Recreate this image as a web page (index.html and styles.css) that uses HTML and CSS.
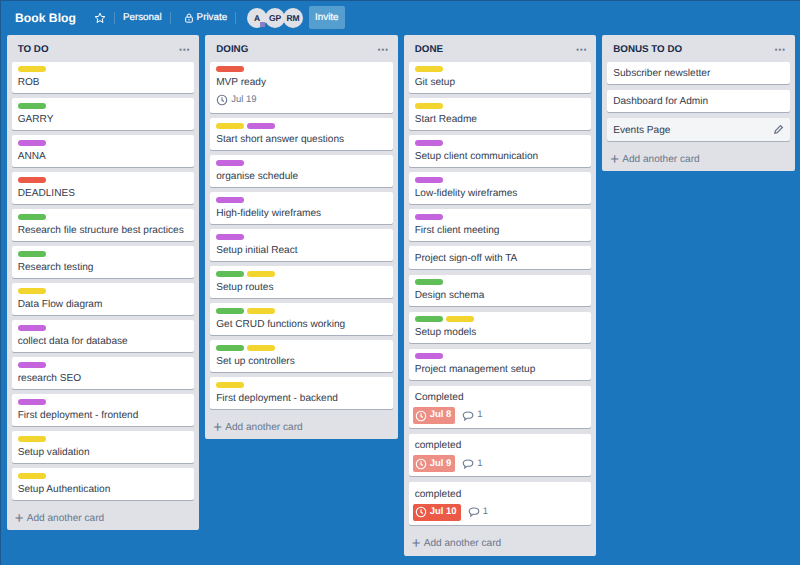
FILE: index.html
```html
<!DOCTYPE html>
<html>
<head>
    <title>Book Blog</title>
    <link rel="stylesheet" href="styles.css">
</head>
<body>
    <svg class="defs" width="0" height="0">
        <symbol id="clock" viewBox="0 0 12 12"><circle cx="6" cy="6" r="4.7" fill="none" stroke="currentColor" stroke-width="1.1"/><path d="M6 3.2V6.3L8 7.4" fill="none" stroke="currentColor" stroke-width="1.1"/></symbol>
        <symbol id="bubble" viewBox="0 0 12 12"><path d="M1.2 5.2C1.2 3.2 3 2 6 2s4.8 1.2 4.8 3.2S9 8.3 6 8.3H4.8L2.8 10V7.8C1.800 7.300 1.200 6.300 1.200 5.200Z" fill="none" stroke="currentColor" stroke-width="1.1"/></symbol>
    </svg>

    <header class="topbar">
        <h1 class="board-name">Book Blog</h1>
        <svg class="star" viewBox="0 0 12 12" width="12" height="12"><path d="M6 1.2L7.400 4.400L10.900 4.700L8.200 7L9 10.500L6 8.600L3 10.500L3.800 7L1.100 4.700L4.600 4.400Z" fill="none" stroke="#fff" stroke-width="1"/></svg>
        <span class="sep"></span>
        <span class="bar-text">Personal</span>
        <span class="sep"></span>
        <svg class="lock" viewBox="0 0 12 12" width="10" height="10"><rect x="2" y="5" width="8" height="6" rx="1" fill="none" stroke="#fff" stroke-width="1.200"/><path d="M3.800 5V3.400a2.200 2.200 0 0 1 4.400 0V5" fill="none" stroke="#fff" stroke-width="1.200"/><circle cx="6" cy="8" r=".9" fill="#fff"/></svg>
        <span class="bar-text">Private</span>
        <span class="sep"></span>
        <div class="members">
            <span class="avatar">A<span class="badge"></span></span>
            <span class="avatar">GP</span>
            <span class="avatar">RM</span>
        </div>
        <span class="invite">Invite</span>
    </header>

    <main class="board">
        <section class="list">
            <div class="list-head"><h2>TO DO</h2><span class="dots">···</span></div>
            <div class="card"><div class="labels"><i class="yellow"></i></div>ROB</div>
            <div class="card"><div class="labels"><i class="green"></i></div>GARRY</div>
            <div class="card"><div class="labels"><i class="purple"></i></div>ANNA</div>
            <div class="card"><div class="labels"><i class="red"></i></div>DEADLINES</div>
            <div class="card"><div class="labels"><i class="green"></i></div>Research file structure best practices</div>
            <div class="card"><div class="labels"><i class="green"></i></div>Research testing</div>
            <div class="card"><div class="labels"><i class="yellow"></i></div>Data Flow diagram</div>
            <div class="card"><div class="labels"><i class="purple"></i></div>collect data for database</div>
            <div class="card"><div class="labels"><i class="purple"></i></div>research SEO</div>
            <div class="card"><div class="labels"><i class="purple"></i></div>First deployment - frontend</div>
            <div class="card"><div class="labels"><i class="yellow"></i></div>Setup validation</div>
            <div class="card"><div class="labels"><i class="yellow"></i></div>Setup Authentication</div>
            <div class="add"><span class="plus">+</span>Add another card</div>
        </section>

        <section class="list">
            <div class="list-head"><h2>DOING</h2><span class="dots">···</span></div>
            <div class="card"><div class="labels"><i class="red"></i></div>MVP ready
                <div class="meta"><span class="due plain"><svg width="12" height="12"><use href="#clock"/></svg>Jul 19</span></div>
            </div>
            <div class="card"><div class="labels"><i class="yellow"></i><i class="purple"></i></div>Start short answer questions</div>
            <div class="card"><div class="labels"><i class="purple"></i></div>organise schedule</div>
            <div class="card"><div class="labels"><i class="purple"></i></div>High-fidelity wireframes</div>
            <div class="card"><div class="labels"><i class="purple"></i></div>Setup initial React</div>
            <div class="card"><div class="labels"><i class="green"></i><i class="yellow"></i></div>Setup routes</div>
            <div class="card"><div class="labels"><i class="green"></i><i class="yellow"></i></div>Get CRUD functions working</div>
            <div class="card"><div class="labels"><i class="green"></i><i class="yellow"></i></div>Set up controllers</div>
            <div class="card"><div class="labels"><i class="yellow"></i></div>First deployment - backend</div>
            <div class="add"><span class="plus">+</span>Add another card</div>
        </section>

        <section class="list">
            <div class="list-head"><h2>DONE</h2><span class="dots">···</span></div>
            <div class="card"><div class="labels"><i class="yellow"></i></div>Git setup</div>
            <div class="card"><div class="labels"><i class="yellow"></i></div>Start Readme</div>
            <div class="card"><div class="labels"><i class="purple"></i></div>Setup client communication</div>
            <div class="card"><div class="labels"><i class="purple"></i></div>Low-fidelity wireframes</div>
            <div class="card"><div class="labels"><i class="purple"></i></div>First client meeting</div>
            <div class="card no-label">Project sign-off with TA</div>
            <div class="card"><div class="labels"><i class="green"></i></div>Design schema</div>
            <div class="card"><div class="labels"><i class="green"></i><i class="yellow"></i></div>Setup models</div>
            <div class="card"><div class="labels"><i class="purple"></i></div>Project management setup</div>
            <div class="card no-label">Completed
                <div class="meta"><span class="due faded"><svg width="12" height="12"><use href="#clock"/></svg>Jul 8</span><span class="comments"><svg width="12" height="12"><use href="#bubble"/></svg>1</span></div>
            </div>
            <div class="card no-label">completed
                <div class="meta"><span class="due faded"><svg width="12" height="12"><use href="#clock"/></svg>Jul 9</span><span class="comments"><svg width="12" height="12"><use href="#bubble"/></svg>1</span></div>
            </div>
            <div class="card no-label">completed
                <div class="meta"><span class="due overdue"><svg width="12" height="12"><use href="#clock"/></svg>Jul 10</span><span class="comments"><svg width="12" height="12"><use href="#bubble"/></svg>1</span></div>
            </div>
            <div class="add"><span class="plus">+</span>Add another card</div>
        </section>

        <section class="list">
            <div class="list-head"><h2>BONUS TO DO</h2><span class="dots">···</span></div>
            <div class="card no-label">Subscriber newsletter</div>
            <div class="card no-label">Dashboard for Admin</div>
            <div class="card no-label hover">Events Page
                <svg class="pencil" viewBox="0 0 12 12" width="11" height="11"><path d="M2 10L2.600 7.400L8.200 1.800L10.200 3.800L4.600 9.400Z" fill="none" stroke="#6b778c" stroke-width="1.400"/></svg>
            </div>
            <div class="add"><span class="plus">+</span>Add another card</div>
        </section>
    </main>
</body>
</html>
```

FILE: styles.css
```css
* {
    box-sizing: border-box;
}
body {
    margin: 0;
    height: 565px;
    overflow: hidden;
    font-family: "Liberation Sans", Arial, sans-serif;
    text-rendering: geometricPrecision;
    background-color: #1b76bd;
    box-shadow: inset 1px 1px 0 rgba(30, 60, 100, 0.5);
    color: #333c4d;
    font-size: 10.1px;
}
.defs {
    display: block;
    height: 0;
}
.topbar {
    display: flex;
    align-items: center;
    height: 35px;
    padding: 0 0 0 15px;
    color: #fff;
}
.board-name {
    margin: 0 18px 0 0;
    font-size: 12.2px;
    font-weight: bold;
}
.lock {
    margin-right: 3px;
    margin-left: 5px;
}
.sep {
    width: 1px;
    height: 12px;
    margin: 0 8px;
    background-color: rgba(255, 255, 255, 0.2);
}
.bar-text {
    font-size: 9.8px;
    -webkit-text-stroke: 0.2px #fff;
}
.members {
    display: flex;
    margin-left: 3px;
}
.avatar {
    position: relative;
    display: flex;
    align-items: center;
    justify-content: center;
    width: 20px;
    height: 20px;
    margin-right: -2px;
    border-radius: 50%;
    background-color: #dfe1e6;
    color: #172b4d;
    font-size: 8.500px;
    font-weight: bold;
}
.badge {
    position: absolute;
    right: 2px;
    bottom: 1px;
    width: 5px;
    height: 5px;
    background-color: #8a7fc0;
}
.invite {
    margin-left: 8px;
    padding: 0 6px;
    height: 23px;
    line-height: 23px;
    border-radius: 2px;
    background-color: #549fd0;
    font-size: 9.8px;
    -webkit-text-stroke: 0.2px #fff;
}
.board {
    display: flex;
    align-items: flex-start;
    gap: 6px;
    padding-left: 6.700px;
}
.list {
    flex: 0 0 192.500px;
    padding: 0 5px;
    border-radius: 2px;
    background-color: #dfe1e6;
}
.list-head {
    display: flex;
    justify-content: space-between;
    align-items: center;
    height: 26.500px;
    padding: 2px 4px 0 6px;
}
.list-head h2 {
    margin: 0;
    font-size: 9.800px;
    font-weight: bold;
    color: #172b4d;
}
.dots {
    font-size: 13px;
    font-weight: bold;
    color: #6b778c;
    letter-spacing: -0.5px;
}
.card {
    position: relative;
    margin-bottom: 5.800px;
    padding: 4.700px 6px 3.500px;
    border-radius: 2px;
    background-color: #fff;
    box-shadow: 0 1px 0 rgba(9, 30, 66, 0.25);
    line-height: 12.500px;
}
.card.no-label {
    padding-top: 6.500px;
}
.card.hover {
    background-color: #f4f5f7;
}
.labels {
    display: flex;
    gap: 3px;
    height: 6px;
    margin-bottom: 4.500px;
}
.labels i {
    display: block;
    width: 28px;
    height: 5.500px;
    border-radius: 3px;
}
.yellow { background-color: #f2d52f; }
.green { background-color: #5fbf56; }
.purple { background-color: #c465dd; }
.red { background-color: #eb5a46; }
.meta {
    display: flex;
    align-items: center;
    gap: 7px;
    margin: 2.500px 0 0.500px -2px;
}
.due {
    display: flex;
    align-items: center;
    gap: 3px;
    height: 17px;
    padding: 0 4px 0 2px;
    border-radius: 2px;
    font-size: 9.500px;
}
.due.plain {
    color: #6b778c;
}
.due.faded {
    background-color: #ee8f85;
    color: #fff;
    font-weight: bold;
}
.due.overdue {
    background-color: #eb5a46;
    color: #fff;
    font-weight: bold;
}
.comments {
    display: flex;
    align-items: center;
    gap: 3px;
    color: #6b778c;
    font-size: 9.500px;
}
.pencil {
    position: absolute;
    right: 6px;
    top: 6px;
}
.add {
    display: flex;
    align-items: center;
    height: 25px;
    margin-top: 2px;
    padding: 1px 0 0 3px;
    color: #6b778c;
}
.plus {
    width: 12px;
    font-size: 15px;
}
```
